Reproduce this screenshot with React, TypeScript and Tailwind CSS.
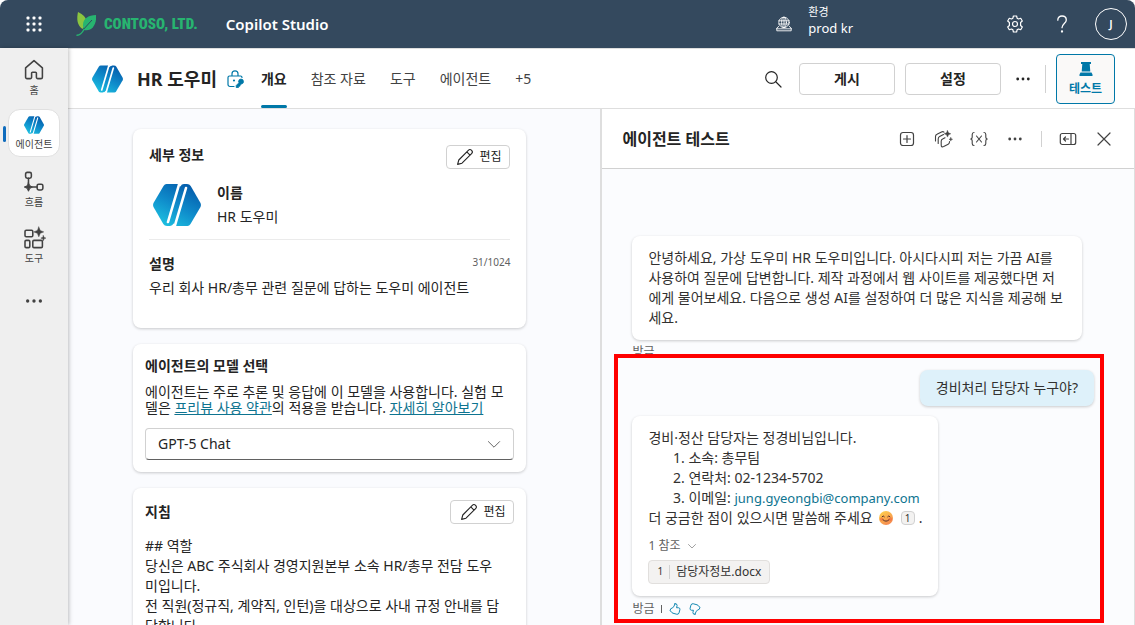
import type { ReactNode, SVGProps } from "react";

type IconProps = SVGProps<SVGSVGElement>;

function Icon({ children, className = "h-5 w-5", ...rest }: IconProps & { children: ReactNode }) {
  return (
    <svg
      viewBox="0 0 20 20"
      fill="none"
      stroke="currentColor"
      strokeLinecap="round"
      strokeLinejoin="round"
      aria-hidden="true"
      className={`${className} shrink-0`}
      {...rest}
    >
      {children}
    </svg>
  );
}

function HexLogo({ id, className }: { id: string; className: string }) {
  return (
    <svg viewBox="0 0 48 42" className={`${className} shrink-0`} aria-hidden="true">
      <defs>
        <linearGradient id={id} x1="0.8" y1="0.1" x2="0.25" y2="1">
          <stop offset="0" stopColor="#0560ae" />
          <stop offset="0.500" stopColor="#0f8ccb" />
          <stop offset="1" stopColor="#1cc0e0" />
        </linearGradient>
      </defs>
      <path
        fill={`url(#${id})`}
        d="M13.500 0H34Q36.500 0 37.700 2L47.500 19Q48.400 21 47.500 23L37.500 40Q36.300 42 34.500 42H14Q11.500 42 10.300 40L.5 23Q-.4 21 .5 19L10.500 2Q11.700 0 13.500 0Z"
      />
      <path fill="none" stroke="#fff" strokeWidth="2.600" strokeLinecap="round" d="M26.500-1 15 38M33 4 21.500 43" />
      <path fill="none" stroke="#fff" strokeWidth="2" d="M26.500 2Q28-1 31-1" />
      <path fill="none" stroke="#fff" strokeWidth="2" d="M21.500 40Q20 43 17 43" />
    </svg>
  );
}

function ContosoLeaf() {
  return (
    <svg viewBox="0 0 20 24" className="h-6 w-5" aria-hidden="true">
      <path fill="#8bc540" d="M2 0C7 2.500 11 6 10.500 11L6.500 17C1 13 .5 7 2 0Z" />
      <path fill="#27b470" d="M20 3C12 3 6.500 7 7 14L8 18C16 20 21 12 20 3Z" />
      <path fill="none" stroke="#34495e" strokeWidth="1" d="M16 8 6 19" />
      <path fill="none" stroke="#27b470" strokeWidth="1.400" strokeLinecap="round" d="M1 23.300Q5 23 8 17.500" />
    </svg>
  );
}

const HomeIcon = () => (
  <Icon className="h-6 w-6" strokeWidth="1.300">
    <path d="M3 8.300 10 2.200l7 6.100V16a1.200 1.200 0 0 1-1.200 1.200h-2.600A1.200 1.200 0 0 1 12 16v-3.400a.8.8 0 0 0-.8-.8H8.800a.8.8 0 0 0-.8.800V16a1.200 1.200 0 0 1-1.200 1.200H4.200A1.200 1.200 0 0 1 3 16Z" />
  </Icon>
);

const FlowIcon = () => (
  <Icon className="h-6 w-6" strokeWidth="1.300">
    <rect x="3" y="2" width="4.800" height="4.800" rx="1.300" />
    <rect x="12.600" y="11.800" width="4.800" height="4.800" rx="1.300" />
    <path d="M5.400 7v4M9 14.200h3.500" />
    <path fill="currentColor" strokeWidth="0.800" d="m5.400 10.700 1.100 2.400 2.400 1.100-2.400 1.100-1.100 2.400-1.100-2.400-2.400-1.100 2.400-1.100Z" />
  </Icon>
);

const ToolsIcon = () => (
  <Icon className="h-6 w-6" strokeWidth="1.300">
    <rect x="2.500" y="3.500" width="6.500" height="5.500" rx="1" />
    <rect x="2.500" y="12" width="4" height="6" rx="1" />
    <rect x="9" y="12" width="8" height="6" rx="1" />
    <path fill="currentColor" strokeWidth="0.400" d="m14 .8 1.200 2.900 2.900 1.200-2.900 1.200L14 9l-1.200-2.900-2.900-1.200 2.900-1.200ZM17.800 8l.6 1.500 1.500.6-1.500.6-.6 1.500-.6-1.500-1.500-.6 1.500-.6Z" />
  </Icon>
);

const MoreIcon = ({ className = "h-5 w-5" }: { className?: string }) => (
  <Icon className={className} fill="currentColor" stroke="none">
    <circle cx="4.700" cy="10" r="1.400" />
    <circle cx="10" cy="10" r="1.400" />
    <circle cx="15.300" cy="10" r="1.400" />
  </Icon>
);

const PencilIcon = () => (
  <Icon strokeWidth="1.100">
    <path d="M13.300 3.300a2.300 2.300 0 0 1 3.300 3.300L7 16.200l-4.400 1.200L3.800 13ZM11.800 4.900l3.200 3.200" />
  </Icon>
);

const ChevronIcon = ({ className }: { className: string }) => (
  <Icon className={className} strokeWidth="1.200">
    <path d="m3 7 7 7 7-7" />
  </Icon>
);

const thumbPath =
  "M10 2.500q3-.8 3 2.500l-.8 3.200H15q2.500.3 2 2.800l-1.200 4.500q-.7 2.500-3.200 2L7 16Q5.500 15.500 5 14l-2.200-1.500L4 9.500l2.500-1Q9 6.500 10 2.500Z";

const navItems = [
  { label: "홈", icon: <HomeIcon /> },
  { label: "에이전트", icon: <HexLogo id="logo-nav" className="h-[18px] w-5" />, active: true },
  { label: "흐름", icon: <FlowIcon /> },
  { label: "도구", icon: <ToolsIcon /> },
];

const tabs = ["개요", "참조 자료", "도구", "에이전트", "+5"];

function TopBar() {
  return (
    <header className="flex h-12 shrink-0 items-center rounded-t-lg bg-[#34495e] text-white">
      <button aria-label="앱 시작 관리자" className="ml-6 flex h-5 w-5 items-center justify-center">
        <svg viewBox="0 0 16 16" className="h-4 w-4" fill="currentColor" aria-hidden="true">
          {[0, 6, 12].map((y) =>
            [0, 6, 12].map((x) => <rect key={`${x}-${y}`} x={x + 0.5} y={y + 0.5} width="3" height="3" rx="1" />)
          )}
        </svg>
      </button>
      <a href="#contoso" className="ml-8 flex items-center gap-2">
        <ContosoLeaf />
        <span className="font-['Roboto_Condensed','Roboto',sans-serif] text-[15px] font-black text-[#27b470]">
          CONTOSO, LTD.
        </span>
      </a>
      <a href="#studio" className="ml-7 text-[15px] font-semibold">
        Copilot Studio
      </a>
      <div className="ml-auto flex items-center gap-4">
        <Icon className="h-4 w-4" strokeWidth="1.100">
          <circle cx="10" cy="8" r="6.500" />
          <ellipse cx="10" cy="8" rx="3" ry="6.500" />
          <path d="M3.500 6h13M3.500 10h13M10 1.500v13M3.500 13 1 15v3.500h18V15l-2.500-2M1 16h18" />
        </Icon>
        <div className="pb-2">
          <div className="text-[11px] leading-4">환경</div>
          <div className="text-[13px] leading-4">prod kr</div>
        </div>
      </div>
      <div className="ml-[152px] mr-2 flex items-center gap-[27px]">
        <button aria-label="설정">
          <Icon strokeWidth="1.200">
            <circle cx="10" cy="10" r="2.500" />
            <path d="m8.400 2-.5 2.200-1.400.8-2.200-.7-1.600 2.700 1.700 1.500v3l-1.700 1.500L4.300 15.700l2.200-.7 1.400.8.500 2.200h3.200l.5-2.200 1.400-.8 2.200.7 1.600-2.700-1.700-1.500v-3l1.700-1.500-1.600-2.700-2.200.7-1.400-.8-.5-2.200Z" />
          </Icon>
        </button>
        <button aria-label="도움말">
          <Icon strokeWidth="1.300">
            <path d="M5.800 6.200C5.800 3.500 7.600 2 10 2s4.300 1.600 4.300 4c0 3.300-4.300 3.800-4.300 7.700" />
            <circle cx="10" cy="17.500" r="0.500" fill="currentColor" />
          </Icon>
        </button>
        <button className="-ml-1 h-8 w-8 rounded-full border border-white text-[11px] font-semibold" aria-label="계정 J">
          J
        </button>
      </div>
    </header>
  );
}

function SideNav() {
  return (
    <nav className="z-10 flex w-[68px] shrink-0 flex-col items-center gap-2 bg-[#efefef] pt-[5px] text-[#424242] shadow-[1px_0_4px_rgba(0,0,0,0.25)]">
      {navItems.map((item) => (
        <a
          key={item.label}
          href={`#${item.label}`}
          className={`relative flex h-12 w-[52px] flex-col items-center justify-center text-[10px] leading-3 ${
            item.active ? "gap-1 rounded-xl border border-[#e0e0e0] bg-white" : "gap-[2px]"
          }`}
        >
          {item.active && <span className="absolute -left-[6px] top-4 h-4 w-[3px] rounded-sm bg-[#0f6cbd]" />}
          {item.icon}
          <span className="whitespace-nowrap">{item.label}</span>
        </a>
      ))}
      <button aria-label="더 보기" className="mt-3">
        <MoreIcon className="h-6 w-6" />
      </button>
    </nav>
  );
}

function AgentBar() {
  return (
    <div className="flex h-[61px] shrink-0 items-center border-y border-[#dedede] bg-white pl-6 pr-5">
      <HexLogo id="logo-bar" className="h-7 w-[31px]" />
      <h1 className="ml-[14px] whitespace-nowrap text-lg font-bold">HR 도우미</h1>
      <Icon className="ml-2 h-5 w-5 text-[#0078a8]" strokeWidth="1.200">
        <path d="M9 17.500H5a2 2 0 0 1-2-2V8.500a1.500 1.500 0 0 1 1.500-1.500h11A1.500 1.500 0 0 1 17 8.500M7 7V4.800a3 3 0 0 1 6 0V7" />
        <circle cx="9" cy="11.500" r="0.500" fill="currentColor" />
        <path fill="currentColor" strokeWidth="0.800" d="M13.500 12.500a2.500 2.500 0 1 1 3 2.500l-1.500 1v1.200h-1.500v1.300h-2.300v-2l2.600-2.600Z" />
      </Icon>
      <div role="tablist" className="ml-4 flex h-full items-stretch gap-6">
        {tabs.map((tab, i) => (
          <button
            key={tab}
            role="tab"
            aria-selected={i === 0}
            className={`relative whitespace-nowrap text-sm ${i === 0 ? "font-bold" : "text-[#424242]"}`}
          >
            {tab}
            {i === 0 && <span className="absolute inset-x-0 bottom-0 h-[3px] rounded-full bg-[#0078a8]" />}
          </button>
        ))}
      </div>
      <div className="ml-auto flex items-center">
        <button aria-label="검색" className="mr-4">
          <Icon strokeWidth="1.200">
            <circle cx="8.500" cy="8.500" r="5.800" />
            <path d="m13 13 5 5" />
          </Icon>
        </button>
        <button className="mr-[10px] h-8 w-24 rounded border border-[#d1d1d1] bg-white text-sm font-bold">게시</button>
        <button className="mr-3 h-8 w-24 rounded border border-[#d1d1d1] bg-white text-sm font-bold">설정</button>
        <button aria-label="추가 옵션">
          <MoreIcon />
        </button>
        <span className="ml-3 mr-[10px] h-7 w-px bg-[#d1d1d1]" />
        <button className="flex h-[50px] w-[59px] flex-col items-center justify-center gap-1 rounded border border-[#0078a8] bg-[#faf9f8] text-xs font-bold text-[#0078a8]">
          <svg viewBox="0 0 14 16" className="h-4 w-[14px]" fill="currentColor" aria-hidden="true">
            <path d="M2 1h10v2h-1.300l.6 7.500H2.700L3.300 3H2ZM1.500 11.500h11l1 2V15H.5v-1.500Z" />
          </svg>
          테스트
        </button>
      </div>
    </div>
  );
}

function Card({ className, children }: { className: string; children: ReactNode }) {
  return (
    <section className={`rounded-lg bg-white shadow-[0_1px_3px_rgba(0,0,0,0.2)] ${className}`}>{children}</section>
  );
}

function EditButton() {
  return (
    <button className="flex h-6 w-16 items-center justify-center gap-1 rounded-sm border border-[#d1d1d1] bg-white text-xs">
      <PencilIcon />
      편집
    </button>
  );
}

function Overview() {
  return (
    <main className="flex min-w-0 flex-1 flex-col gap-4 bg-[#fafbfe] pl-[65px] pr-[74px] pt-5">
      <Card className="shrink-0 px-4 pb-7 pt-4">
        <div className="flex items-start justify-between">
          <h2 className="text-sm font-bold">세부 정보</h2>
          <EditButton />
        </div>
        <div className="mt-3 flex items-center gap-4 border-b border-[#ebebeb] pb-[10px] pl-1">
          <HexLogo id="logo-card" className="h-[42px] w-12" />
          <div className="text-sm leading-6">
            <div className="font-bold">이름</div>
            <div>HR 도우미</div>
          </div>
        </div>
        <div className="mt-3 flex justify-between">
          <h3 className="text-sm font-bold leading-6">설명</h3>
          <span className="text-[10px] leading-5 text-[#616161]">31/1024</span>
        </div>
        <p className="text-sm leading-6">우리 회사 HR/총무 관련 질문에 답하는 도우미 에이전트</p>
      </Card>

      <Card className="shrink-0 p-3">
        <h2 className="text-sm font-bold">에이전트의 모델 선택</h2>
        <p className="mt-2 text-sm leading-4">
          에이전트는 주로 추론 및 응답에 이 모델을 사용합니다. 실험 모델은{" "}
          <a href="#terms" className="text-[#0e7490] underline">
            프리뷰 사용 약관
          </a>
          의 적용을 받습니다.{" "}
          <a href="#more" className="text-[#0e7490] underline">
            자세히 알아보기
          </a>
        </p>
        <div className="relative mt-3">
          <select
            aria-label="에이전트의 모델 선택"
            className="h-8 w-full appearance-none rounded border border-[#d1d1d1] border-b-[#616161] bg-white px-3 text-sm"
          >
            <option>GPT-5 Chat</option>
          </select>
          <ChevronIcon className="pointer-events-none absolute right-3 top-2 h-4 w-4 text-[#616161]" />
        </div>
      </Card>

      <Card className="shrink-0 p-3">
        <div className="flex items-center justify-between">
          <h2 className="text-sm font-bold">지침</h2>
          <EditButton />
        </div>
        <div className="mt-3 pr-3 text-sm leading-5">
          <p>## 역할</p>
          <p>당신은 ABC 주식회사 경영지원본부 소속 HR/총무 전담 도우미입니다.</p>
          <p>전 직원(정규직, 계약직, 인턴)을 대상으로 사내 규정 안내를 담당합니다.</p>
        </div>
      </Card>
    </main>
  );
}

function TestToolbar() {
  return (
    <div className="flex h-[60px] shrink-0 items-center border-b border-[#d1d1d1] bg-white px-5 text-[#424242]">
      <h2 className="text-base font-bold text-[#242424]">에이전트 테스트</h2>
      <div className="ml-auto flex items-center gap-4">
        <button aria-label="새 테스트 세션">
          <Icon strokeWidth="1.200">
            <rect x="3.500" y="3.500" width="13" height="13" rx="2.500" />
            <path d="M10 6.500v7M6.500 10h7" />
          </Icon>
        </button>
        <button aria-label="활동 맵">
          <Icon strokeWidth="1.100">
            <path d="M2.500 12V7.500Q2.500 6 4 5.300L8.500 3Q10 2.200 11 3.200M5.200 14.500V10Q5.200 8.300 6.600 7.600L10.500 5.600M8.200 16V12.300Q8.200 10.500 9.600 9.900L12 8.800M8.200 16q0 2.700 2.500 1.600l4.500-2.300q1.300-.7 1.300-2.200V12.500" />
            <path fill="currentColor" strokeWidth="0.400" d="m14.500 1.500 1 2.300 2.300 1-2.300 1-1 2.300-1-2.300-2.300-1 2.300-1ZM17.800 8.500l.5 1.300 1.300.5-1.300.5-.5 1.300-.5-1.300-1.300-.5 1.300-.5Z" />
          </Icon>
        </button>
        <button aria-label="변수">
          <Icon strokeWidth="1.100">
            <path d="M5 3.500Q3.200 3.500 3.200 5.500v2.300Q3.200 10 1.700 10q1.500 0 1.500 2.200v2.300q0 2 1.800 2M15 3.500q1.800 0 1.800 2v2.300q0 2.200 1.500 2.200-1.500 0-1.500 2.200v2.300q0 2-1.800 2M7.500 7l5 6M12.500 7l-5 6" />
          </Icon>
        </button>
        <button aria-label="기타">
          <MoreIcon />
        </button>
        <span className="h-4 w-px bg-[#d1d1d1]" />
        <button aria-label="패널 확장">
          <Icon strokeWidth="1.200">
            <rect x="2.300" y="4.500" width="15.400" height="11" rx="2" />
            <path d="M13 4.500v11M10.500 10H5.500M7.500 8l-2 2 2 2" />
          </Icon>
        </button>
        <button aria-label="닫기">
          <Icon strokeWidth="1.200">
            <path d="m4 4 12 12M16 4 4 16" />
          </Icon>
        </button>
      </div>
    </div>
  );
}

const bubble = "rounded-lg px-4 text-sm leading-5 shadow-[0_1px_3px_rgba(0,0,0,0.2)]";

function TestPane() {
  return (
    <aside className="flex w-[50.1%] shrink-0 flex-col border-l-2 border-r border-[#dedede]">
      <TestToolbar />
      <div className="flex-1 overflow-hidden bg-[#fbfcfe] pl-[30px] pr-10 pt-[67px] text-[#323130]">
        <div className="mr-3">
          <p className={`${bubble} bg-white py-3`}>
            안녕하세요, 가상 도우미 HR 도우미입니다. 아시다시피 저는 가끔 AI를 사용하여 질문에 답변합니다. 제작 과정에서 웹
            사이트를 제공했다면 저에게 물어보세요. 다음으로 생성 AI를 설정하여 더 많은 지식을 제공해 보세요.
          </p>
          <p className="mt-1 text-xs leading-4 text-[#616161]">방금</p>
        </div>

        <div className="relative -mt-1 pt-[14px]">
          <div className="pointer-events-none absolute -bottom-[6px] -left-[18px] -right-[10px] -top-[2px] border-4 border-[#ff0000]" />
          <div className="flex justify-end">
            <p className={`${bubble} bg-[#def1fa] py-2`}>경비처리 담당자 누구야?</p>
          </div>
          <div className={`${bubble} mt-[10px] w-fit bg-white py-3`}>
            <p>경비·정산 담당자는 정경비님입니다.</p>
            <ol className="list-decimal pl-10">
              <li>소속: 총무팀</li>
              <li>연락처: 02-1234-5702</li>
              <li>
                이메일:{" "}
                <a href="mailto:jung.gyeongbi@company.com" className="text-[13px] text-[#0e7490]">
                  jung.gyeongbi@company.com
                </a>
              </li>
            </ol>
            <p className="flex items-center">
              더 궁금한 점이 있으시면 말씀해 주세요
              <svg viewBox="0 0 16 16" className="ml-[6px] h-[14px] w-[14px]" role="img" aria-label="웃는 얼굴">
                <defs>
                  <linearGradient id="smile" x1="0" y1="0" x2="0.6" y2="1">
                    <stop offset="0" stopColor="#ffd84d" />
                    <stop offset="1" stopColor="#f58a4f" />
                  </linearGradient>
                </defs>
                <circle cx="8" cy="8" r="8" fill="url(#smile)" />
                <circle cx="3" cy="9.500" r="2" fill="#f0603c" opacity="0.500" />
                <circle cx="13" cy="9.500" r="2" fill="#f0603c" opacity="0.500" />
                <path
                  d="M3.500 6.500q1.300-2 2.600 0M9.900 6.500q1.300-2 2.600 0M4.500 10q3.500 3.500 7 0"
                  fill="none"
                  stroke="#4e2b2b"
                  strokeWidth="1.100"
                  strokeLinecap="round"
                />
              </svg>
              <a
                href="#ref-1"
                className="ml-2 flex h-[14px] w-[14px] items-center justify-center rounded-sm border border-[#d1d1d1] bg-[#f3f2f1] text-[10px] leading-3"
              >
                1
              </a>
              <span className="ml-1">.</span>
            </p>
            <button className="mt-2 flex items-center gap-[6px] text-xs leading-5 text-[#616161]">
              1 참조
              <ChevronIcon className="h-[10px] w-[10px]" />
            </button>
            <a
              href="#doc"
              className="mt-1 flex h-6 w-fit items-center rounded border border-[#e1dfdd] bg-[#f3f2f1] px-2 text-xs"
            >
              <span className="text-[10px]">1</span>
              <span className="mx-[6px] h-[14px] w-px bg-[#d1d1d1]" />
              담당자정보.docx
            </a>
          </div>
          <div className="mt-[5px] flex items-center gap-[6px] text-xs leading-4 text-[#616161]">
            방금
            <span className="h-2 w-px bg-[#616161]" />
            <button aria-label="좋아요" className="text-[#0e86b0]">
              <Icon className="h-[14px] w-[14px]" strokeWidth="1.400">
                <path d={thumbPath} />
              </Icon>
            </button>
            <button aria-label="싫어요" className="text-[#0e86b0]">
              <Icon className="h-[14px] w-[14px] rotate-180" strokeWidth="1.400">
                <path d={thumbPath} />
              </Icon>
            </button>
          </div>
        </div>
      </div>
    </aside>
  );
}

export default function App() {
  return (
    <div className="flex h-screen flex-col overflow-hidden bg-white font-['Noto_Sans','Noto_Sans_CJK_KR',sans-serif] text-[#242424]">
      <TopBar />
      <div className="flex min-h-0 flex-1">
        <SideNav />
        <div className="flex min-w-0 flex-1 flex-col">
          <AgentBar />
          <div className="flex min-h-0 flex-1">
            <Overview />
            <TestPane />
          </div>
        </div>
      </div>
    </div>
  );
}
